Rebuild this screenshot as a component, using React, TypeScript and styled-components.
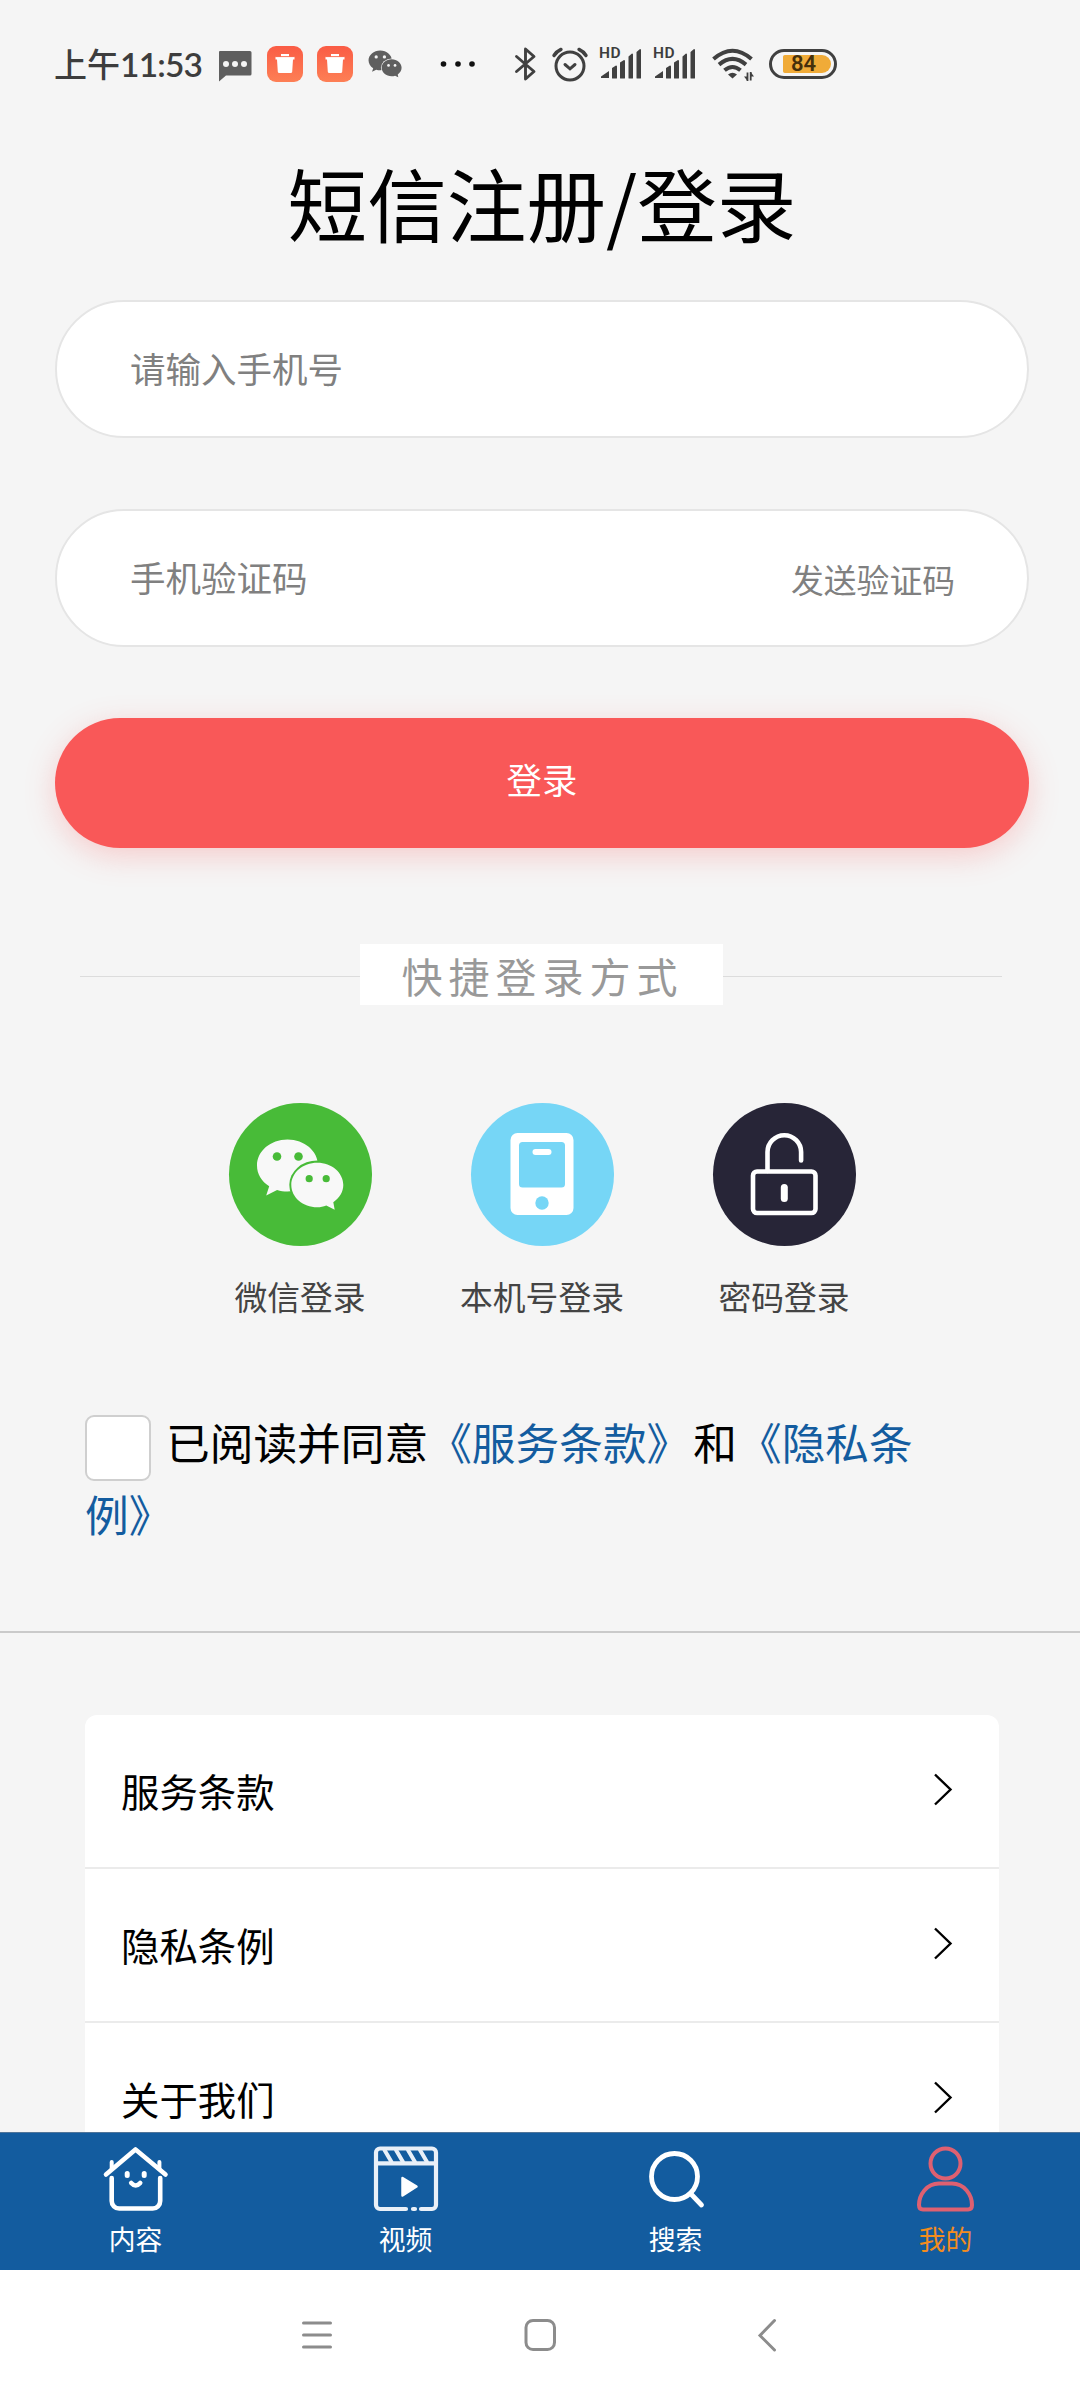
import React from "react";
import styled, { createGlobalStyle } from "styled-components";

const GlobalStyle = createGlobalStyle`
  * { box-sizing: border-box; }
  body {
    margin: 0;
    background: #f5f5f5;
    font-family: "Noto Sans CJK SC", "Noto Sans", sans-serif;
    color: #000;
  }
`;

const Screen = styled.div`
  width: 1080px;
  height: 2400px;
  display: flex;
  flex-direction: column;
  overflow: hidden;
`;

/* ---------- status bar ---------- */

const StatusBar = styled.header`
  flex: none;
  height: 128px;
  padding-left: 54px;
  display: flex;
  align-items: center;
  color: #3d3d3d;

  svg { display: block; flex: none; overflow: visible; }
`;

const Clock = styled.div`
  width: 150px;
  display: flex;
  align-items: baseline;
  font-size: 33px;
  line-height: 40px;
  padding-bottom: 2px;
  font-weight: 500;
  white-space: nowrap;
`;

const ClockDigits = styled.span`
  font-family: Lato, sans-serif;
  font-size: 33.500px;
  font-weight: 600;
  letter-spacing: -0.8px;
`;

const StatusItem = styled.div<{ $gap: number }>`
  margin-left: ${(p) => p.$gap}px;
  flex: none;
`;

const SignalItem = styled.div`
  margin-left: 12px;
  width: 42px;
  height: 34px;
  flex: none;
  position: relative;
`;

const SignalTag = styled.span`
  position: absolute;
  left: -1px;
  top: -3px;
  font: 600 15.500px/18px Roboto, sans-serif;
  letter-spacing: 0.6px;
`;

const Battery = styled.div`
  margin-left: 15px;
  width: 68px;
  height: 30px;
  border: 3px solid #404040;
  border-radius: 16px;
  padding: 3px 3px 3px 11px;
  display: flex;
`;

const BatteryLevel = styled.div`
  flex: 1;
  display: flex;
  align-items: center;
  justify-content: center;
  padding-right: 7px;
  border-radius: 2px 10px 10px 2px;
  background: #f0ab38;
  color: #46300c;
  font: 600 22px/18px Roboto, sans-serif;
`;

const ChatIcon = () => (
  <svg width="34" height="36" viewBox="0 0 34 36">
    <path d="M2 5h30a1.500 1.500 0 0 1 1.500 1.500v21.500a1.500 1.500 0 0 1-1.500 1.500H8L1 35.500V6A1 1 0 0 1 2 5z" fill="#5f5f5f" />
    {[8, 17, 26].map((x) => <circle key={x} cx={x} cy="18" r="3" fill="#f5f5f5" />)}
  </svg>
);

const BinIcon = ({ id }: { id: string }) => (
  <svg width="36" height="36" viewBox="0 0 36 36">
    <defs>
      <linearGradient id={id} x1="0" y1="0" x2="0" y2="1">
        <stop offset="0" stopColor="#fa5c45" />
        <stop offset="1" stopColor="#fd7f55" />
      </linearGradient>
    </defs>
    <rect width="36" height="36" rx="9" fill={`url(#${id})`} />
    <path d="M14 8h8v2.800h5.500v2.700H26l-.8 12.200a1.500 1.500 0 0 1-1.500 1.400H12.300a1.500 1.500 0 0 1-1.500-1.400L10 13.500H8.500v-2.700H14z" fill="#fff" />
    <path d="M8.500 10.600h19" stroke="#fa6448" strokeWidth=".9" />
  </svg>
);

const WeChatGlyph = ({ size, fill, back }: { size: number; fill: string; back: string }) => (
  <svg width={size} height={size} viewBox="24.500 24.500 94 94">
    <path d="M59 36c17 0 30.500 11.600 30.500 26S76 88 59 88c-3.800 0-7-.4-10.400-1.600L37.700 92l3-9.300C33 78 28.500 70.500 28.500 62 28.500 47.600 42 36 59 36z" fill={fill} />
    <ellipse cx="88.800" cy="81.500" rx="28" ry="24.500" fill={back} />
    <path d="M88.800 59.200c14.400 0 26 10 26 22.300 0 7-4 13-10 17.200l1.400 7.600-8.400-4.300c-3 1.200-5.700 1.800-9 1.800-14.400 0-26-10-26-22.300s11.600-22.300 26-22.300z" fill={fill} />
    <circle cx="48.500" cy="53" r="4.300" fill={back} />
    <circle cx="70" cy="53" r="4.300" fill={back} />
    <circle cx="80.700" cy="75.200" r="3.600" fill={back} />
    <circle cx="97.700" cy="75.200" r="3.600" fill={back} />
  </svg>
);

const MoreDots = () => (
  <svg width="36" height="8" viewBox="0 0 36 8">
    {[3.5, 18, 32].map((x) => <circle key={x} cx={x} cy="4" r="2.800" fill="#111" />)}
  </svg>
);

const BluetoothIcon = () => (
  <svg width="22" height="36" viewBox="0 0 22 36" fill="none" stroke="#404040" strokeWidth="2.900" strokeLinejoin="round" strokeLinecap="round">
    <path d="M2.500 10.500L20 25.500L11.500 33V3L20 10.500L2.500 25.500" />
  </svg>
);

const AlarmIcon = () => (
  <svg width="36" height="36" viewBox="0 0 36 36" fill="none" stroke="#404040" strokeWidth="3" strokeLinecap="round">
    <circle cx="18" cy="20" r="14" />
    <path d="M13 18.500l5 4.300 5-4.300" />
    <path d="M2 9.500Q4.500 5.500 9 3.400M34 9.500Q31.500 5.500 27 3.400" strokeWidth="3.400" />
  </svg>
);

const Signal = () => (
  <SignalItem>
    <SignalTag>HD</SignalTag>
    <svg width="42" height="34" viewBox="0 0 42 34" fill="#404040">
      <path d="M1 31v-1.500L9 24v7zM12 31V21l4-2.500q1 0 1 1V31q0 .6-.8.600h-3.600Q12 31.600 12 31zM20 31V15.500l4-2.500q1 0 1 1V31q0 .6-.8.600h-3.600Q20 31.600 20 31zM28.500 31V9.500l3.500-3q1 0 1 1V31q0 .6-.8.600h-3Q28.500 31.600 28.500 31zM36.500 31V5l3.500-3q1 0 1 1V31q0 .6-.8.600h-3Q36.500 31.600 36.500 31z" />
    </svg>
  </SignalItem>
);

const WifiIcon = () => (
  <svg width="42" height="36" viewBox="0 0 42 36" fill="none" stroke="#404040" strokeWidth="4">
    <path d="M1.500 13Q20.500-3.500 39.500 13" />
    <path d="M7 18.600Q20.500 7.200 34 18.600" />
    <path d="M12.500 24.300Q20.500 17.600 28.500 24.300" />
    <path d="M16 28.500q4.500-3.600 9 0l-4.500 4z" fill="#404040" stroke="none" />
    <path d="M35.500 26.500v8.500M38.700 26v8.500" strokeWidth="1.800" />
    <path d="M32 30.500l3.500 4.500v-4.500zM42 30.500L38.700 26v4.500z" fill="#404040" stroke="none" />
  </svg>
);

/* ---------- login form ---------- */

const Content = styled.main`
  flex: 1;
  min-height: 0;
  overflow: hidden;
  display: flex;
  flex-direction: column;
`;

const Title = styled.h1`
  margin: 0 0 24px;
  padding-left: 4px;
  height: 148px;
  font-size: 79.600px;
  line-height: 148px;
  font-weight: 400;
  text-align: center;
`;

const Form = styled.section`
  margin: 0 51px 0 55px;
  display: flex;
  flex-direction: column;
`;

const Field = styled.div`
  height: 138px;
  margin-bottom: 71px;
  padding: 0 72px 0 73px;
  display: flex;
  align-items: center;
  justify-content: space-between;
  border: 2px solid #e5e5e5;
  border-radius: 69px;
  background: #fff;
  color: #808080;
`;

const Placeholder = styled.span`
  font-size: 35.500px;
  line-height: 48px;
  padding-bottom: 2px;
`;

const SendCode = styled.span`
  font-size: 32.800px;
  line-height: 44px;
  padding-top: 1px;
`;

const LoginButton = styled.button`
  height: 130px;
  border: 0;
  padding: 0 0 9px;
  border-radius: 65px;
  background: #f95858;
  box-shadow: 0 8px 30px rgba(251, 88, 88, 0.26);
  color: #fff;
  font: inherit;
  font-size: 35.400px;
`;

/* ---------- quick login ---------- */

const QuickHeading = styled.div`
  margin: 96px 78px 0 80px;
  height: 61px;
  display: flex;
  align-items: center;

  &::before, &::after {
    content: "";
    flex: 1;
    height: 1px;
    margin-top: 4px;
    background: #dcdcdc;
  }
`;

const QuickLabel = styled.span`
  width: 363px;
  height: 61px;
  padding-left: 42px;
  background: #fff;
  color: #999;
  font-size: 41px;
  line-height: 62px;
  letter-spacing: 6px;
  white-space: nowrap;
`;

const QuickList = styled.div`
  margin: 98px 0 0 179px;
  display: flex;
`;

const QuickItem = styled.div`
  width: 242px;
  display: flex;
  flex-direction: column;
  align-items: center;
  gap: 26px;
  color: #444;
  font-size: 32.800px;
  line-height: 48px;
`;

const QuickBadge = styled.div<{ $color: string }>`
  width: 143px;
  height: 143px;
  border-radius: 50%;
  background: ${(p) => p.$color};
  display: flex;
  align-items: center;
  justify-content: center;
`;

const PhoneGlyph = () => (
  <svg width="64" height="86" viewBox="0 0 64 86">
    <rect x=".5" y="1" width="63" height="82" rx="7" fill="#fff" />
    <rect x="9" y="10" width="46" height="45.500" rx="3.500" fill="#76d6f6" />
    <rect x="22.500" y="17" width="19" height="6" rx="3" fill="#fff" />
    <circle cx="32" cy="71" r="6.700" fill="#76d6f6" />
  </svg>
);

const LockGlyph = () => (
  <svg width="68" height="86" viewBox="0 0 68 86" fill="none" stroke="#fff" strokeLinecap="round">
    <rect x="3" y="39.500" width="62.500" height="41.500" rx="4" strokeWidth="4.600" />
    <path d="M17.500 39V20a16.800 16.800 0 0 1 33.600 0v8.500" strokeWidth="4.600" />
    <path d="M34.300 55.500v11" strokeWidth="7" />
  </svg>
);

/* ---------- agreement ---------- */

const Agreement = styled.div`
  margin: 85px 130px 0 85px;
  font-size: 43.700px;
  line-height: 72px;
`;

const AgreementLine = styled.div`
  display: flex;
  height: 72px;
  white-space: nowrap;
`;

const Checkbox = styled.span`
  flex: none;
  width: 66px;
  height: 66px;
  margin: 10px 15px 0 0;
  border: 2px solid #cfcfcf;
  border-radius: 9px;
  background: #fff;
`;

const PolicyLink = styled.span`
  color: #135c9f;
`;

const Joiner = styled.span`
  margin: 0 1px 0 3px;
`;

const Rule = styled.div`
  flex: none;
  height: 2px;
  margin-top: 82px;
  background: #cacaca;
`;

/* ---------- menu ---------- */

const Menu = styled.nav`
  margin: 82px 81px 0 85px;
  border-radius: 12px 12px 0 0;
  background: #fff;
`;

const MenuRow = styled.div`
  height: 154px;
  padding: 0 46px 2px 36px;
  border-bottom: 2px solid #ebebeb;
  display: flex;
  align-items: center;
  justify-content: space-between;
  font-size: 38.400px;
  line-height: 56px;
`;

const Chevron = () => (
  <svg width="20" height="34" viewBox="0 0 20 34" fill="none" stroke="#000" strokeWidth="2.400">
    <path d="M2 1.500L17.500 16.500L2 31.500" />
  </svg>
);

/* ---------- bottom bars ---------- */

const TabBar = styled.footer`
  flex: none;
  height: 138px;
  border-top: 1px solid #50759a;
  background: #135c9f;
  display: grid;
  grid-template-columns: repeat(4, 1fr);
`;

const Tab = styled.div<{ $active?: boolean }>`
  display: flex;
  flex-direction: column;
  align-items: center;
  padding: 11px 0 0 1px;
  color: ${(p) => (p.$active ? "#f28c1e" : "#fff")};
  font-size: 26.800px;
  line-height: 38px;

  svg { display: block; margin-bottom: 6px; }
`;

const HouseIcon = () => (
  <svg width="70" height="70" viewBox="0 0 70 70" fill="none" stroke="#fff" strokeWidth="4.600" strokeLinecap="round" strokeLinejoin="round">
    <path d="M5 30.500L34.500 5.500L64.500 30.500" />
    <path d="M10.700 34v23a7.500 7.500 0 0 0 7.500 7.500h33.500A7.500 7.500 0 0 0 59.200 57V34" />
    <path d="M10.700 25v-7M58.400 25v-7" strokeWidth="4" />
    <path d="M30.200 39q4.500 5 9 0" />
    <path d="M26.200 29.500v2M43.200 29.500v2" strokeWidth="5" />
  </svg>
);

const VideoIcon = () => (
  <svg width="70" height="70" viewBox="0 0 70 70" fill="none" stroke="#e9f0f8" strokeWidth="4.200" strokeLinecap="round" strokeLinejoin="round">
    <path d="M35 65H9a4 4 0 0 1-4-4V8.500a4 4 0 0 1 4-4h52a4 4 0 0 1 4 4V61a4 4 0 0 1-4 4H50M42 65h2M5 19.300h60" />
    <path d="M13.500 6l7 12M25 6l7 12M37 6l7 12M49 6l7 12" strokeWidth="4" />
    <path d="M31.500 34l14 8.500-14 9z" fill="#fff" stroke="#fff" strokeWidth="2.500" />
  </svg>
);

const SearchIcon = () => (
  <svg width="70" height="70" viewBox="0 0 70 70" fill="none" stroke="#fff" strokeWidth="4.800" strokeLinecap="round">
    <circle cx="33.500" cy="32.500" r="23" />
    <path d="M50 50L60.500 61" />
  </svg>
);

const UserIcon = () => (
  <svg width="70" height="70" viewBox="0 0 70 70" fill="none" stroke="#de6071" strokeWidth="4">
    <circle cx="34.500" cy="19.500" r="15" />
    <path d="M28 39.500h13C53.500 39.500 61 51 61 61q0 4.500-4 4.500H12q-4 0-4-4.500C8 51 15.500 39.500 28 39.500z" strokeLinejoin="round" />
  </svg>
);

const SystemNav = styled.footer`
  flex: none;
  height: 130px;
  background: #fff;
  padding-left: 300px;
  display: flex;
  align-items: center;
  gap: 188px;
`;

const navStroke = { fill: "none", stroke: "#8c8c8c", strokeWidth: 3, strokeLinecap: "round" as const };

const quickOptions = [
  { label: "微信登录", color: "#48bb38", icon: <WeChatGlyph size={94} fill="#f8f8f8" back="#48bb38" /> },
  { label: "本机号登录", color: "#76d6f6", icon: <PhoneGlyph /> },
  { label: "密码登录", color: "#272537", icon: <LockGlyph /> },
];

const tabs = [
  { label: "内容", icon: <HouseIcon /> },
  { label: "视频", icon: <VideoIcon /> },
  { label: "搜索", icon: <SearchIcon /> },
  { label: "我的", icon: <UserIcon />, active: true },
];

export default function App() {
  return (
    <>
      <GlobalStyle />
      <Screen>
        <StatusBar>
          <Clock>上午<ClockDigits>11:53</ClockDigits></Clock>
          <StatusItem $gap={14}><ChatIcon /></StatusItem>
          <StatusItem $gap={15}><BinIcon id="binA" /></StatusItem>
          <StatusItem $gap={14}><BinIcon id="binB" /></StatusItem>
          <StatusItem $gap={14}><WeChatGlyph size={36} fill="#5f5f5f" back="#f5f5f5" /></StatusItem>
          <StatusItem $gap={37}><MoreDots /></StatusItem>
          <StatusItem $gap={38}><BluetoothIcon /></StatusItem>
          <StatusItem $gap={16}><AlarmIcon /></StatusItem>
          <Signal />
          <Signal />
          <StatusItem $gap={16}><WifiIcon /></StatusItem>
          <Battery><BatteryLevel>84</BatteryLevel></Battery>
        </StatusBar>

        <Content>
          <Title>短信注册/登录</Title>
          <Form>
            <Field><Placeholder>请输入手机号</Placeholder></Field>
            <Field>
              <Placeholder>手机验证码</Placeholder>
              <SendCode>发送验证码</SendCode>
            </Field>
            <LoginButton>登录</LoginButton>
          </Form>

          <QuickHeading><QuickLabel>快捷登录方式</QuickLabel></QuickHeading>
          <QuickList>
            {quickOptions.map((o) => (
              <QuickItem key={o.label}>
                <QuickBadge $color={o.color}>{o.icon}</QuickBadge>
                <span>{o.label}</span>
              </QuickItem>
            ))}
          </QuickList>

          <Agreement>
            <AgreementLine>
              <Checkbox role="checkbox" aria-checked={false} />
              <span>已阅读并同意</span>
              <PolicyLink>《服务条款》</PolicyLink>
              <Joiner>和</Joiner>
              <PolicyLink>《隐私条</PolicyLink>
            </AgreementLine>
            <AgreementLine>
              <PolicyLink>例》</PolicyLink>
            </AgreementLine>
          </Agreement>
          <Rule />

          <Menu>
            {["服务条款", "隐私条例", "关于我们"].map((label) => (
              <MenuRow key={label}>
                <span>{label}</span>
                <Chevron />
              </MenuRow>
            ))}
          </Menu>
        </Content>

        <TabBar>
          {tabs.map((t) => (
            <Tab key={t.label} $active={t.active}>
              {t.icon}
              <span>{t.label}</span>
            </Tab>
          ))}
        </TabBar>

        <SystemNav>
          <svg width="34" height="34" viewBox="0 0 34 34" {...navStroke}>
            <path d="M3.500 5h27M3.500 17h27M3.500 29h27" />
          </svg>
          <svg width="36" height="36" viewBox="0 0 36 36" {...navStroke}>
            <rect x="4" y="3.500" width="28.500" height="29" rx="7" />
          </svg>
          <svg width="34" height="36" viewBox="0 0 34 36" {...navStroke}>
            <path d="M28.500 3.500L14 18.500L28.500 33" />
          </svg>
        </SystemNav>
      </Screen>
    </>
  );
}
